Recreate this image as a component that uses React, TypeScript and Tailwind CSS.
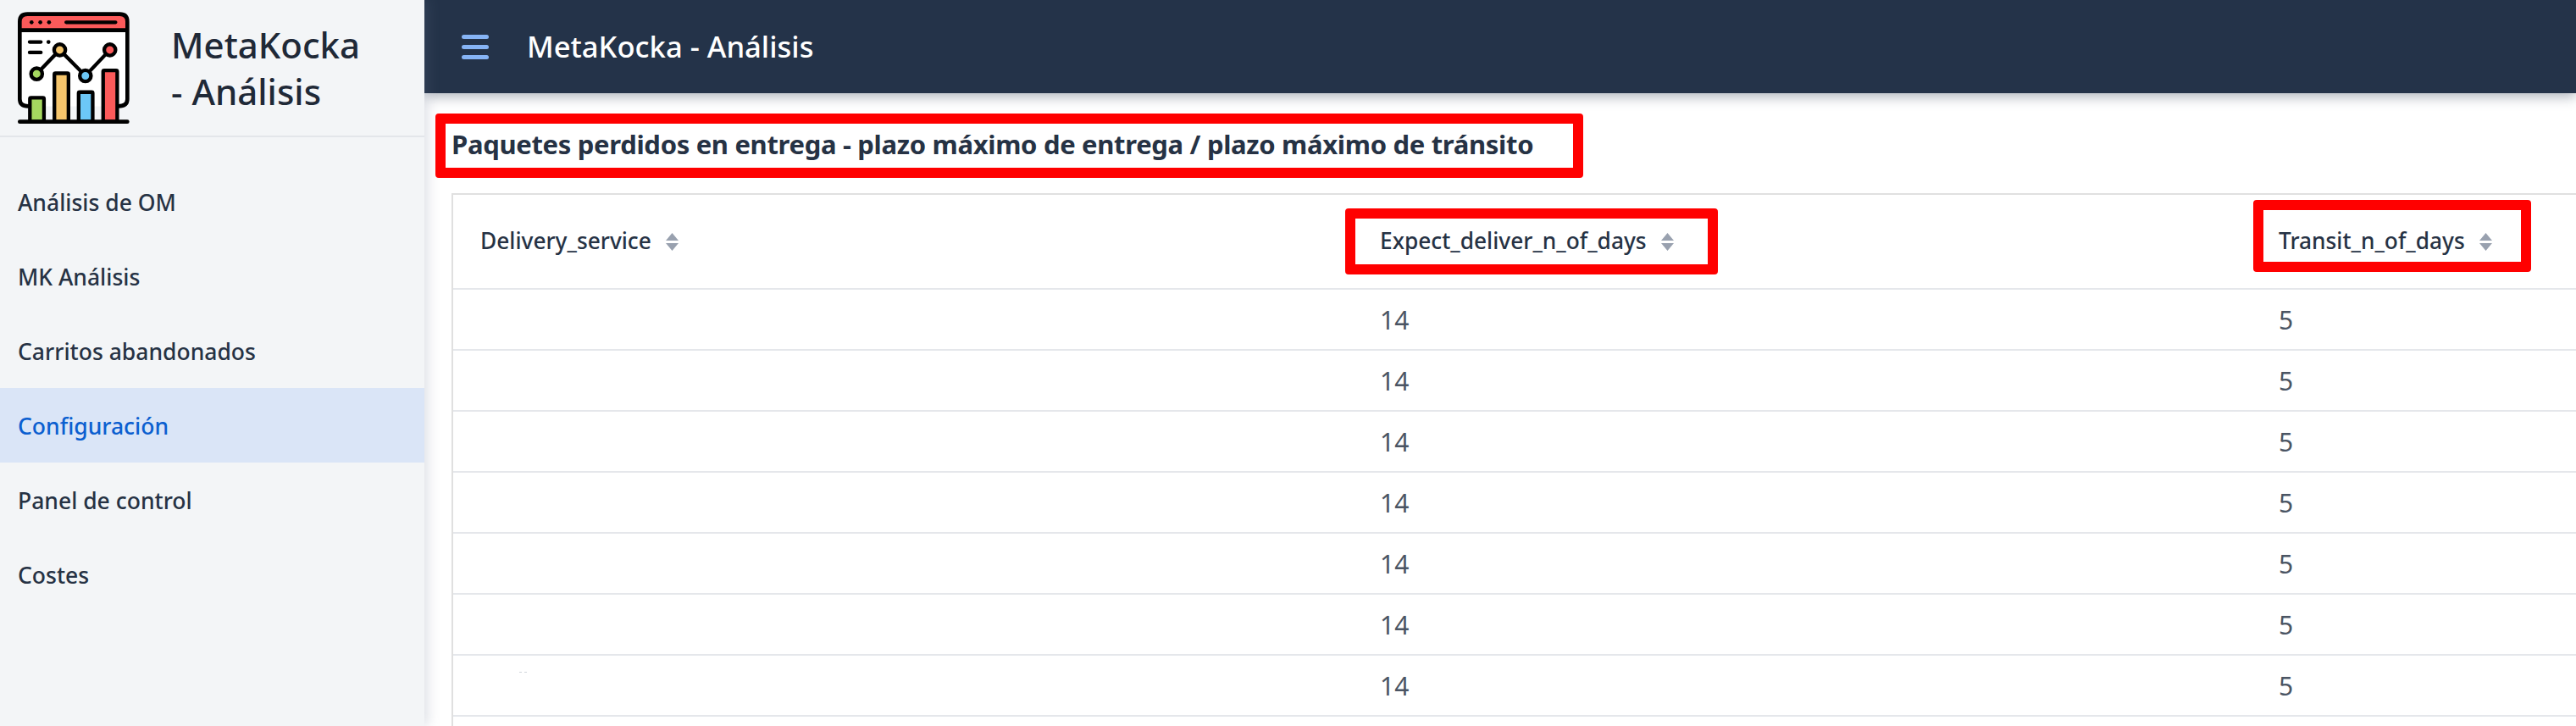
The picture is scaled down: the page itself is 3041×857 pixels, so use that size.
const NAV_ITEMS = ['Análisis de OM', 'MK Análisis', 'Carritos abandonados', 'Configuración', 'Panel de control', 'Costes'];
const COLUMNS = ['Delivery_service', 'Expect_deliver_n_of_days', 'Transit_n_of_days'];
const ROWS = [0, 1, 2, 3, 4, 5, 6];

function Logo() {
  return (
    <svg viewBox="60 40 400 400" className="w-[133px] h-[133px] shrink-0">
      <path d="M70 100 V350 Q70 375 100 375 H420 Q452 375 452 350 V100 Z" fill="#fff" />
      <path d="M70 105 V75 Q70 48 97 48 H425 Q452 48 452 75 V105 Z" fill="#fb5a5a" />
      <path d="M100 375 Q70 375 70 350 V75 Q70 48 97 48 H425 Q452 48 452 75 V350 Q452 375 420 375 M70 105 H452" fill="none" stroke="#000" strokeWidth="14" strokeLinecap="round" />
      <circle cx="112" cy="77" r="7" />
      <circle cx="143" cy="77" r="7" />
      <circle cx="174" cy="77" r="7" />
      <path d="M235 77 H410 M105 147 H145 M105 184 H145" stroke="#000" strokeWidth="13" strokeLinecap="round" />
      <circle cx="172" cy="147" r="7" />
      <path d="M130 260 L212 175 L303 267 L390 175" fill="none" stroke="#000" strokeWidth="13" />
      <circle cx="130" cy="260" r="20" fill="#a5d85f" stroke="#000" strokeWidth="13" />
      <circle cx="212" cy="175" r="20" fill="#f5c56c" stroke="#000" strokeWidth="13" />
      <circle cx="303" cy="267" r="20" fill="#6cc7f7" stroke="#000" strokeWidth="13" />
      <circle cx="390" cy="175" r="20" fill="#fb5a5a" stroke="#000" strokeWidth="13" />
      <rect x="106" y="345" width="50" height="85" rx="4" fill="#a5d85f" stroke="#000" strokeWidth="13" />
      <rect x="193" y="258" width="50" height="172" rx="4" fill="#f5c56c" stroke="#000" strokeWidth="13" />
      <rect x="279" y="325" width="50" height="105" rx="4" fill="#6cc7f7" stroke="#000" strokeWidth="13" />
      <rect x="366" y="248" width="50" height="182" rx="4" fill="#fb5a5a" stroke="#000" strokeWidth="13" />
      <path d="M70 430 H452" stroke="#000" strokeWidth="14" strokeLinecap="round" />
    </svg>
  );
}

function SortIcon() {
  return (
    <svg viewBox="0 0 15 21" className="w-[15px] h-[21px] shrink-0 text-gray-400" fill="currentColor">
      <path d="M7.5 0 L15 9 H0 Z M0 12 H15 L7.5 21 Z" />
    </svg>
  );
}

function RedBox({ className }: { className: string }) {
  return <div className={`absolute border-[12px] border-[#ff0000] rounded-[4px] ${className}`} />;
}

export default function App() {
  return (
    <div className="flex w-[3041px] h-[857px] overflow-hidden bg-white text-[#1f2937] font-['Noto_Sans','Open_Sans',sans-serif]">
      {/* Sidebar */}
      <aside className="w-[501px] shrink-0 bg-[#f3f5f7] relative z-20 shadow-[4px_0_14px_rgba(100,116,139,0.22)]">
        <div className="h-[162px] flex items-center gap-[49px] pl-[20px] border-b-2 border-[#e3e6ea]">
          <Logo />
          <div className="text-[42px] leading-[55px] font-medium">MetaKocka<br />- Análisis</div>
        </div>
        <nav className="pt-[32px]">
          {NAV_ITEMS.map((item) => (
            <div
              key={item}
              className={`h-[88px] flex items-center pl-[21px] pt-[4px] text-[26.5px] font-medium ${item === 'Configuración' ? 'bg-[#dae5f7] text-[#0b5fd0]' : 'text-[#263244]'}`}
            >
              {item}
            </div>
          ))}
        </nav>
      </aside>

      {/* Main */}
      <main className="relative flex-1 min-w-0 overflow-hidden">
        <header className="h-[110px] bg-[#243349] flex items-center pl-[44px] gap-[45px] relative z-10 shadow-[0_4px_14px_rgba(71,85,105,0.45)]">
          <div className="w-[32px] flex flex-col gap-[7px]">
            <span className="h-[5px] rounded-full bg-[#86b4f5]" />
            <span className="h-[5px] rounded-full bg-[#86b4f5]" />
            <span className="h-[5px] rounded-full bg-[#86b4f5]" />
          </div>
          <span className="text-[34.6px] font-medium text-white">MetaKocka - Análisis</span>
        </header>

        <div className="h-[118px] flex items-center pl-[32px] pt-[3px]">
          <h1 className="text-[31px] tracking-[-0.32px] font-bold text-[#263244]">Paquetes perdidos en entrega - plazo máximo de entrega / plazo máximo de tránsito</h1>
        </div>

        <div className="ml-[32px] w-[3190px] h-[700px] border-l-2 border-t-2 border-[#e0e0e0]">
          <table className="table-fixed w-full border-separate border-spacing-0">
            <colgroup>
              <col className="w-[1062px]" />
              <col className="w-[1061px]" />
              <col />
            </colgroup>
            <thead>
              <tr>
                {COLUMNS.map((col) => (
                  <th key={col} className="h-[112px] border-b-2 border-[#e5e7eb] pl-[32px] text-left font-medium text-[26.3px] text-[#263244]">
                    <div className="flex items-center gap-[17px]">
                      {col}
                      <SortIcon />
                    </div>
                  </th>
                ))}
              </tr>
            </thead>
            <tbody>
              {ROWS.map((row) => (
                <tr key={row}>
                  <td className="h-[72px] border-b-2 border-[#e5e7eb] pl-[78px]">
                    {row === 6 && (
                      <div className="flex gap-[3px] -mt-[16px]">
                        <span className="w-[3px] h-[1px] bg-gray-300" />
                        <span className="w-[3px] h-[1px] bg-gray-300" />
                      </div>
                    )}
                  </td>
                  <td className="h-[72px] border-b-2 border-[#e5e7eb] pl-[32px] text-[30px] text-[#4b5563]">14</td>
                  <td className="h-[72px] border-b-2 border-[#e5e7eb] pl-[32px] text-[30px] text-[#4b5563]">5</td>
                </tr>
              ))}
            </tbody>
          </table>
        </div>

        {/* Red highlight annotations */}
        <RedBox className="left-[13px] top-[134px] w-[1355px] h-[76px] z-20" />
        <RedBox className="left-[1087px] top-[246px] w-[440px] h-[78px]" />
        <RedBox className="left-[2159px] top-[236px] w-[328px] h-[85px]" />
      </main>
    </div>
  );
}
